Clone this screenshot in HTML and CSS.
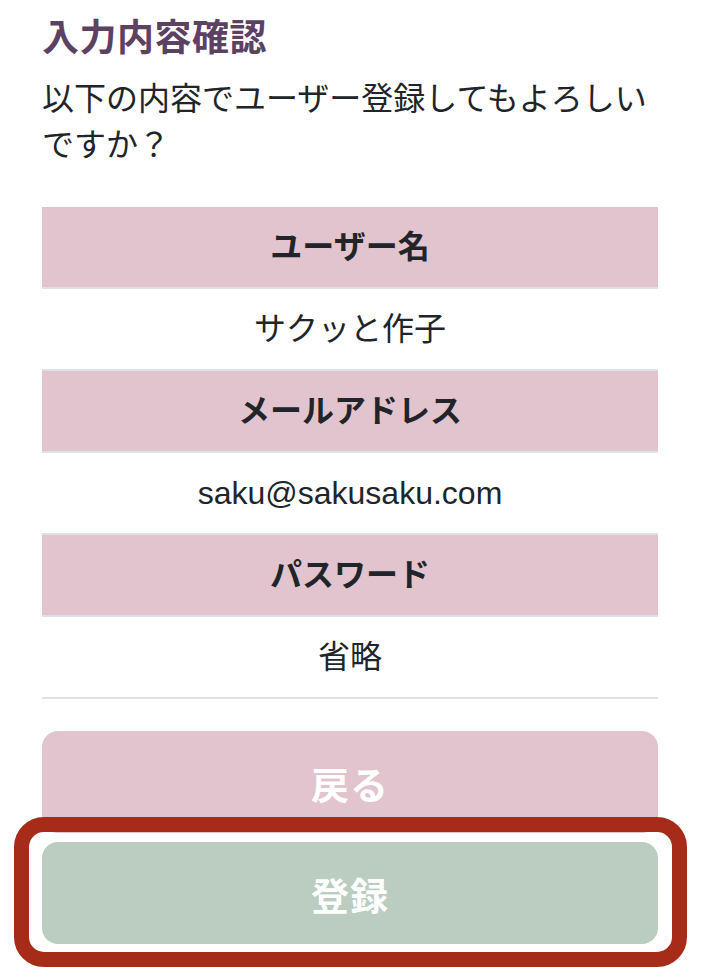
FILE: index.html
```html
<!DOCTYPE html>
<html lang="ja">
<head>
<meta charset="utf-8">
<title>入力内容確認</title>
<link rel="stylesheet" href="styles.css">
</head>
<body>
<main class="page">
  <h3 class="title">入力内容確認</h3>
  <p class="lead">以下の内容でユーザー登録してもよろしいですか？</p>
  <table class="confirm">
    <tbody>
      <tr><th>ユーザー名</th></tr>
      <tr><td>サクッと作子</td></tr>
      <tr><th>メールアドレス</th></tr>
      <tr><td>saku@sakusaku.com</td></tr>
      <tr><th>パスワード</th></tr>
      <tr><td>省略</td></tr>
    </tbody>
  </table>
  <div class="actions">
    <button class="btn btn-back" type="button">戻る</button>
    <div class="submit-wrap">
      <button class="btn btn-submit" type="submit">登録</button>
      <span class="highlight" aria-hidden="true"></span>
    </div>
  </div>
</main>
</body>
</html>
```

FILE: styles.css
```css
* { box-sizing: border-box; }

html, body {
  margin: 0;
  padding: 0;
  background: #ffffff;
}

body {
  font-family: "Liberation Sans", "Noto Sans CJK JP", sans-serif;
  color: #212529;
  font-size: 32px;
  line-height: 48px;
}

.page {
  width: 616px;
  margin-left: 42px;
  padding-top: 13px;
  padding-bottom: 40px;
}

.title {
  margin: 0;
  font-family: "Noto Sans CJK JP", serif;
  font-weight: 700;
  font-size: 37px;
  line-height: 44px;
  letter-spacing: 0.5px;
  color: #5c4262;
}

.lead {
  margin: 19px 0 0;
  font-size: 32px;
  line-height: 46px;
}

.confirm {
  width: 100%;
  margin-top: 39px;
  border-collapse: collapse;
}

.confirm th,
.confirm td {
  padding: 16px 0;
  text-align: center;
  line-height: 48px;
  border-bottom: 2px solid #dee2e6;
  font-size: 32px;
}

.confirm th {
  background: #e2c4ce;
  font-weight: 700;
}

.confirm td {
  background: #ffffff;
  font-weight: 400;
}

.actions {
  margin-top: 32px;
  display: flex;
  flex-direction: column;
  gap: 9px;
}

.btn {
  display: block;
  width: 100%;
  height: 102px;
  border: 0;
  border-radius: 16px;
  font-family: "Noto Sans CJK JP", serif;
  font-weight: 700;
  font-size: 38px;
  color: #ffffff;
  letter-spacing: 1px;
  padding: 0;
}

.btn-back {
  background: #e2c4ce;
}

.btn-submit {
  background: #bacdc0;
}

.submit-wrap {
  position: relative;
}

.highlight {
  position: absolute;
  left: -28px;
  right: -29px;
  top: -25px;
  bottom: -23px;
  border: 15px solid #a62b19;
  border-radius: 30px;
  pointer-events: none;
}
```
